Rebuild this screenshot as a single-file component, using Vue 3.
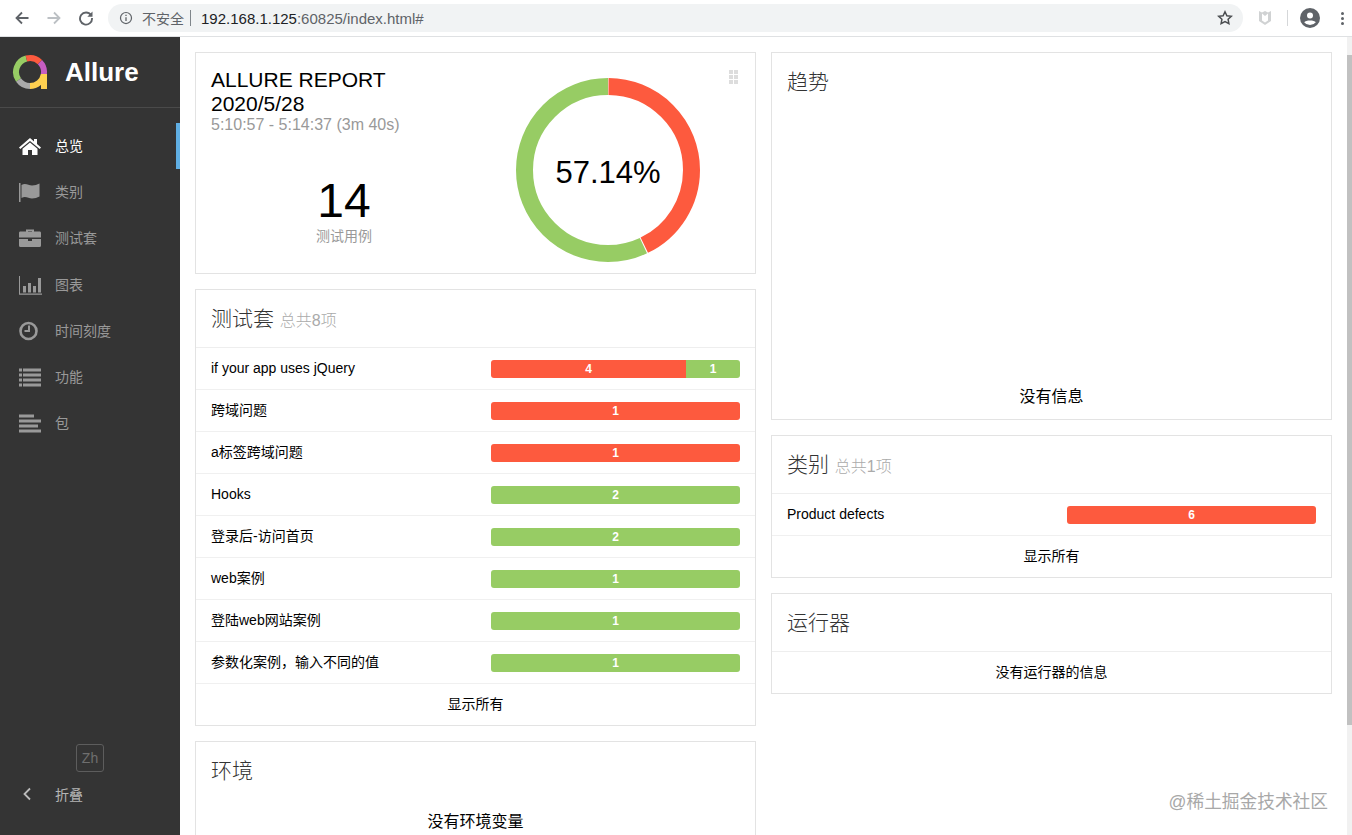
<template>
  <div class="window">
    <header class="chrome">
      <svg class="nav-icon" viewBox="0 0 16 16" width="16" height="16"><path d="M14.5 8H2.5M8 2.5 2.5 8 8 13.500" fill="none" stroke="#5f6368" stroke-width="1.800"/></svg>
      <svg class="nav-icon" viewBox="0 0 16 16" width="16" height="16"><path d="M1.500 8h12M8 2.500 13.500 8 8 13.500" fill="none" stroke="#bcc0c4" stroke-width="1.800"/></svg>
      <svg class="nav-icon" viewBox="0 0 16 16" width="16" height="16"><path d="M13 5.200A6 6 0 1 0 14 8" fill="none" stroke="#5f6368" stroke-width="1.900"/><path d="M14.500 1.500v5.200H9.300z" fill="#5f6368"/></svg>
      <div class="omnibox">
        <svg viewBox="0 0 16 16" width="14" height="14"><circle cx="8" cy="8" r="6.300" fill="none" stroke="#5f6368" stroke-width="1.400"/><path d="M8 7v4.500M8 4.300v1.400" stroke="#5f6368" stroke-width="1.500"/></svg>
        <span class="insecure">不安全</span>
        <span class="divider"></span>
        <span class="url">192.168.1.125<span class="url-rest">:60825/index.html#</span></span>
        <svg class="star" viewBox="0 0 16 16" width="16" height="16"><path d="m8 1.800 1.900 4 4.400.5-3.200 3 .8 4.400L8 11.600l-3.900 2.100.8-4.400-3.200-3 4.400-.5z" fill="none" stroke="#4a4d50" stroke-width="1.500"/></svg>
      </div>
      <svg class="shield" viewBox="0 0 16 18" width="16" height="18"><path d="M2 2l3 1.500L8 2l3 1.500L14 2v10l-6 4-6-4z" fill="#d0d2d3"/><path d="M5 4.500v7l3 2 3-2v-7L8 7z" fill="#fff"/></svg>
      <span class="chrome-sep"></span>
      <svg class="account" viewBox="0 0 20 20" width="20" height="20"><circle cx="10" cy="10" r="10" fill="#5f6368"/><circle cx="10" cy="7.500" r="3" fill="#fff"/><path d="M4.200 14.200c1.500-2.400 10.100-2.400 11.600 0a7.300 7.300 0 0 1-11.600 0z" fill="#fff"/></svg>
      <span class="kebab"><i></i><i></i><i></i></span>
    </header>

    <div class="page">
      <aside class="sidebar">
        <div class="brand">
          <svg viewBox="0 0 36 36" width="36" height="36">
            <g fill="none" stroke-width="6">
              <path d="M6.530 26.030A14 14 0 0 1 14.380 4.480" stroke="#97cc64"/>
              <path d="M14.380 4.480A14 14 0 0 1 27.900 8.100" stroke="#fd5a3e"/>
              <path d="M27.900 8.100A14 14 0 0 1 31.790 20.430" stroke="#c75dc2"/>
              <path d="M31.790 20.430A14 14 0 0 1 18 32" stroke="#ffd050"/>
              <path d="M32 20v15" stroke="#ffd050"/>
              <path d="M18 32A14 14 0 0 1 6.530 26.030" stroke="#aaa"/>
            </g>
          </svg>
          <span class="brand-name">Allure</span>
        </div>

        <nav class="menu">
          <a v-for="item in menu" :key="item.label" class="menu-item" :class="{ active: item.active }">
            <svg class="menu-icon" viewBox="0 0 24 20" width="24" height="20" v-html="item.icon"></svg>
            <span class="menu-label">{{ item.label }}</span>
          </a>
        </nav>

        <div class="sidebar-foot">
          <span class="lang">Zh</span>
          <a class="collapse">
            <svg viewBox="0 0 10 14" width="10" height="14"><path d="M8 1.500 2.500 7 8 12.500" fill="none" stroke="#bbb" stroke-width="1.800"/></svg>
            <span>折叠</span>
          </a>
        </div>
      </aside>

      <main class="content">
        <div class="column">
          <section class="card summary">
            <div class="summary-left">
              <h1 class="report-title">ALLURE REPORT<br />2020/5/28</h1>
              <div class="report-time">5:10:57 - 5:14:37 (3m 40s)</div>
              <div class="count">14</div>
              <div class="count-label">测试用例</div>
            </div>
            <div class="donut">
              <svg viewBox="0 0 184 184" width="184" height="184">
                <circle v-for="seg in donut" :key="seg.color" cx="92" cy="92" r="83.500" fill="none" stroke-width="17"
                  :stroke="seg.color" :stroke-dasharray="seg.dash" :stroke-dashoffset="seg.offset" transform="rotate(-90 92 92)" />
              </svg>
              <span class="donut-label">57.14%</span>
            </div>
            <span class="grip"><i v-for="n in 6" :key="n"></i></span>
          </section>

          <section class="card">
            <div class="card-head"><h2>测试套 <small>总共8项</small></h2></div>
            <div v-for="row in suites" :key="row.name" class="row">
              <span class="row-name">{{ row.name }}</span>
              <div class="bar">
                <span v-if="row.failed" class="seg failed" :style="{ flexGrow: row.failedShare }">{{ row.failed }}</span>
                <span v-if="row.passed" class="seg passed" :style="{ flexGrow: 1 - row.failedShare }">{{ row.passed }}</span>
              </div>
            </div>
            <div class="card-foot">显示所有</div>
          </section>

          <section class="card">
            <div class="card-head plain"><h2>环境</h2></div>
            <div class="empty-env">没有环境变量</div>
          </section>
        </div>

        <div class="column">
          <section class="card trend">
            <div class="card-head plain"><h2>趋势</h2></div>
            <div class="trend-empty">没有信息</div>
          </section>

          <section class="card">
            <div class="card-head"><h2>类别 <small>总共1项</small></h2></div>
            <div class="row">
              <span class="row-name">Product defects</span>
              <div class="bar"><span class="seg failed" style="flex-grow: 1">6</span></div>
            </div>
            <div class="card-foot">显示所有</div>
          </section>

          <section class="card">
            <div class="card-head"><h2>运行器</h2></div>
            <div class="card-foot">没有运行器的信息</div>
          </section>
        </div>
      </main>

      <div class="scrollbar"><div class="thumb"></div></div>
      <span class="watermark">@稀土掘金技术社区</span>
    </div>
  </div>
</template>

<script setup>
const circumference = 2 * Math.PI * 83.5
const failedLen = circumference * (6 / 14)

const donut = [
  { color: '#fd5a3e', dash: `${failedLen - 1} ${circumference}`, offset: -0.5 },
  { color: '#97cc64', dash: `${circumference - failedLen - 1} ${circumference}`, offset: -(failedLen + 0.5) }
]

const menu = [
  { label: '总览', active: true, icon: '<path d="M12 2 1 11.500l1.300 1.500L12 5l9.700 8 1.300-1.500L19 8V3h-3v2.500z"/><path d="M12 6.500 4.500 12.700V19H10v-5h4v5h5.500v-6.300z"/>' },
  { label: '类别', icon: '<path d="M1 1h1.500v19H1z"/><path d="M3.500 3c4-2.500 7 .5 10.500 .5 3 0 5-1 7.500-2v13c-2.500 1-4.500 2-7.500 2-3.500 0-6.500-3-10.500-.5z"/>' },
  { label: '测试套', icon: '<path d="M8 3.500V1.500h8v2h6a1.500 1.500 0 0 1 1 1.500v4.500H1V5a1.500 1.500 0 0 1 1-1.500zM10 3.500h4V3h-4z"/><path d="M1 11h9v2h4v-2h9v6.500a1.500 1.500 0 0 1-1.500 1.500h-19A1.500 1.500 0 0 1 1 17.500z"/>' },
  { label: '图表', icon: '<path d="M1 1h1v17.500h23v1.200H1z"/><path d="M5 11h3v6.500H5zM10 8h3v9.500h-3zM15 11h3v6.500h-3zM20 3h3v14.500h-3z"/>' },
  { label: '时间刻度', icon: '<circle cx="10.500" cy="10" r="8" fill="none" stroke="currentColor" stroke-width="2.600"/><path d="M10 4.500h2V11H6.500V9H10z"/>' },
  { label: '功能', icon: '<path d="M1 1.500h3v3H1zM5 1.500h18v3H5zM1 6.500h3v3H1zM5 6.500h18v3H5zM1 11.500h3v3H1zM5 11.500h18v3H5zM1 16.500h3v3H1zM5 16.500h18v3H5z"/>' },
  { label: '包', icon: '<path d="M1 1.500h15v3H1zM1 6.500h22v3H1zM1 11.500h19v3H1zM1 16.500h22v3H1z"/>' }
]

const suites = [
  { name: 'if your app uses jQuery', failed: 4, passed: 1, failedShare: 0.784 },
  { name: '跨域问题', failed: 1, failedShare: 1 },
  { name: 'a标签跨域问题', failed: 1, failedShare: 1 },
  { name: 'Hooks', passed: 2, failedShare: 0 },
  { name: '登录后-访问首页', passed: 2, failedShare: 0 },
  { name: 'web案例', passed: 1, failedShare: 0 },
  { name: '登陆web网站案例', passed: 1, failedShare: 0 },
  { name: '参数化案例，输入不同的值', passed: 1, failedShare: 0 }
]
</script>

<style>
html,
body {
  margin: 0;
  height: 100%;
  overflow: hidden;
}
</style>

<style scoped>
.window {
  height: 835px;
  display: flex;
  flex-direction: column;
  overflow: hidden;
  background: #fff;
  color: #000;
  font-family: "Liberation Sans", "Noto Sans CJK SC", sans-serif;
  font-size: 14px;
}

.chrome {
  height: 36px;
  flex: none;
  display: flex;
  align-items: center;
  padding: 0 8px 0 14px;
  gap: 16px;
  border-bottom: 1px solid #dfe1e3;
  background: #fff;
}

.nav-icon {
  flex: none;
}

.omnibox {
  flex: 1;
  height: 28px;
  display: flex;
  align-items: center;
  margin-left: -2px;
  padding: 0 10px 0 11px;
  background: #f1f3f4;
  border-radius: 14px;
}

.insecure {
  margin-left: 9px;
  font-size: 14px;
  color: #5f6368;
}

.divider {
  width: 1px;
  height: 16px;
  margin: 0 10px 0 6px;
  background: #80868b;
}

.url {
  font-size: 15px;
  color: #202124;
}

.url-rest {
  color: #5f6368;
}

.star {
  margin-left: auto;
}

.shield {
  flex: none;
  margin-left: -2px;
}

.chrome-sep {
  width: 1px;
  height: 16px;
  margin-left: -2px;
  background: #d5d7d9;
}

.account {
  flex: none;
  margin-left: -4px;
}

.kebab {
  display: flex;
  flex-direction: column;
  gap: 2px;
  margin-left: 5px;
}

.kebab i {
  width: 3px;
  height: 3px;
  border-radius: 50%;
  background: #5f6368;
}

.page {
  position: relative;
  flex: 1;
  min-height: 0;
  display: flex;
}

.sidebar {
  width: 180px;
  flex: none;
  display: flex;
  flex-direction: column;
  background: #343434;
  color: #999;
}

.brand {
  height: 70px;
  flex: none;
  display: flex;
  align-items: center;
  gap: 17px;
  padding-left: 12px;
  border-bottom: 1px solid #4a4a4a;
}

.brand-name {
  font-size: 26px;
  font-weight: 700;
  color: #fff;
}

.menu {
  padding-top: 15px;
}

.menu-item {
  height: 46.200px;
  display: flex;
  align-items: center;
  gap: 13px;
  padding-left: 18px;
  box-sizing: border-box;
}

.menu-item.active {
  color: #fff;
  border-right: 4px solid #5faee3;
}

.menu-label {
  margin-bottom: 2px;
}

.menu-icon {
  flex: none;
  fill: currentColor;
  color: inherit;
}

.sidebar-foot {
  margin-top: auto;
  padding-bottom: 31px;
  display: flex;
  flex-direction: column;
  align-items: center;
}

.lang {
  width: 26px;
  height: 26px;
  display: flex;
  align-items: center;
  justify-content: center;
  border: 1px solid #5d5d5d;
  border-radius: 3px;
  color: #6f6f6f;
  margin-bottom: 12px;
}

.collapse {
  align-self: stretch;
  display: flex;
  align-items: center;
  gap: 23px;
  padding-left: 22px;
  color: #b5b5b5;
}

.content {
  flex: 1;
  min-width: 0;
  display: flex;
  gap: 15px;
  padding: 15px;
  overflow: hidden;
}

.column {
  flex: 1 1 0;
  min-width: 0;
  display: flex;
  flex-direction: column;
  gap: 15px;
}

.card {
  flex: none;
  position: relative;
  border: 1px solid #e3e3e3;
  background: #fff;
}

.summary {
  height: 222px;
  box-sizing: border-box;
  display: flex;
}

.summary-left {
  width: 296px;
  padding: 15px 0 0 15px;
  box-sizing: border-box;
}

.report-title {
  margin: 0;
  font-size: 21px;
  font-weight: 400;
  line-height: 24px;
}

.report-time {
  font-size: 16px;
  line-height: 18px;
  color: #999;
}

.count {
  width: 266px;
  margin-top: 39px;
  text-align: center;
  font-size: 48px;
  line-height: 56px;
}

.count-label {
  width: 266px;
  text-align: center;
  font-size: 14px;
  line-height: 20px;
  margin-top: -3px;
  color: #999;
}

.donut {
  position: relative;
  width: 184px;
  height: 184px;
  margin: 25px 0 0 24px;
}

.donut svg {
  display: block;
}

.donut-label {
  position: absolute;
  left: 0;
  right: 0;
  top: 77px;
  text-align: center;
  font-size: 31px;
  line-height: 36px;
}

.grip {
  position: absolute;
  top: 17px;
  right: 17px;
  display: grid;
  grid-template-columns: 4px 4px;
  gap: 1px;
}

.grip i {
  width: 4px;
  height: 4px;
  background: #ddd;
}

.card-head {
  height: 58px;
  box-sizing: border-box;
  display: flex;
  align-items: center;
  padding: 0 15px 4px;
  border-bottom: 1px solid #eee;
}

.card-head.plain {
  border-bottom: 0;
}

.card-head h2 {
  margin: 0;
  font-size: 21px;
  font-weight: 300;
  color: #333;
}

.card-head small {
  font-size: 16px;
  color: #aaa;
}

.row {
  height: 42px;
  box-sizing: border-box;
  display: flex;
  align-items: center;
  justify-content: space-between;
  padding: 0 15px;
  border-bottom: 1px solid #f0f0f0;
}

.row-name {
  font-size: 14px;
  line-height: 20px;
  margin-bottom: 2px;
}

.bar {
  width: 249px;
  height: 18px;
  display: flex;
  border-radius: 3px;
  overflow: hidden;
}

.seg {
  flex: 1 1 0;
  text-align: center;
  font-size: 12px;
  font-weight: 700;
  line-height: 18px;
  color: #fff;
}

.seg.failed {
  background: #fd5a3e;
}

.seg.passed {
  background: #97cc64;
}

.card-foot {
  height: 41px;
  box-sizing: border-box;
  padding-bottom: 4px;
  display: flex;
  align-items: center;
  justify-content: center;
  font-size: 14px;
}

.empty-env {
  padding-top: 8px;
  padding-bottom: 20px;
  text-align: center;
  font-size: 16px;
}

.trend {
  height: 368px;
  box-sizing: border-box;
  display: flex;
  flex-direction: column;
}

.trend-empty {
  margin-top: auto;
  padding-bottom: 12px;
  text-align: center;
  font-size: 16px;
}

.scrollbar {
  width: 5px;
  flex: none;
  background: #f1f1f1;
}

.thumb {
  height: 670px;
  margin-top: 18px;
  background: #c1c1c1;
}

.watermark {
  position: absolute;
  right: 24px;
  bottom: 21px;
  font-size: 17.700px;
  line-height: 24px;
  color: #a8a8a8;
}
</style>
